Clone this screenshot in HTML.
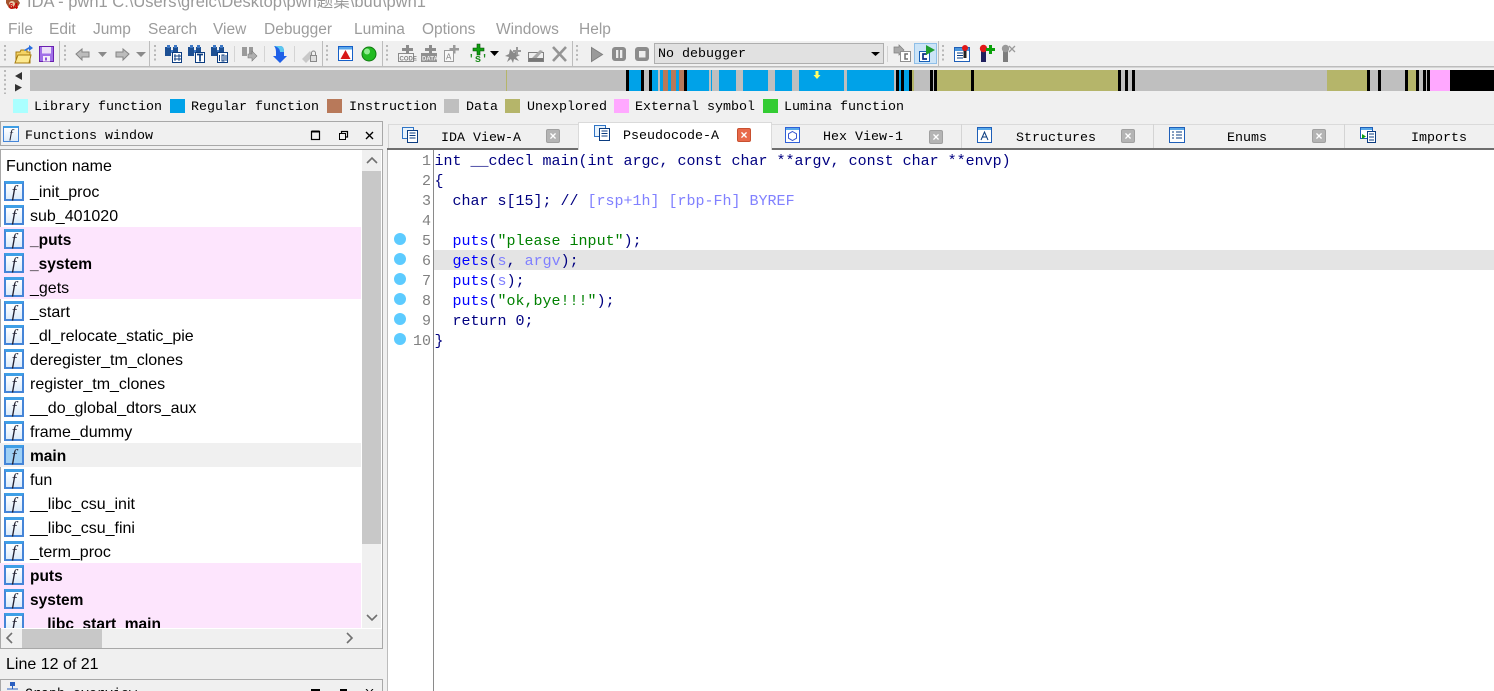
<!DOCTYPE html>
<html><head><meta charset="utf-8"><style>
html,body{margin:0;padding:0;width:1494px;height:691px;overflow:hidden;background:#f0f0f0}
body{position:relative;font-family:"Liberation Sans","Noto Sans CJK SC",sans-serif}
.a{position:absolute;white-space:pre}
.m{font:15.5px/20px "Liberation Sans",sans-serif;color:#9c9c9c;top:20px}
.l{font:13.33px/16px "Liberation Mono",monospace;color:#000;top:100px}
.s{position:absolute;top:99px;width:15px;height:14px}
.t{font:13.33px/16px "Liberation Mono",monospace;color:#000;top:130px}
.r{position:absolute;left:0;width:361px;height:24px}
.r b,.r span{position:absolute;left:30px;top:4px;line-height:20px;color:#000;white-space:pre}
.r span{font-size:16px}
.r b{font-weight:bold;font-size:15.5px}
.i{position:absolute;left:4px;top:2px;box-sizing:border-box;width:20px;height:20px;border:2px solid #4585d8;border-top:3px solid #3f9fe6;background:linear-gradient(#fff,#dcebfa);font:italic 17px/15px "Liberation Serif",serif;text-align:center;color:#223}
.c{font:15px/20px "Liberation Mono",monospace;color:#000080;left:434.500px}
.n{font:15px/20px "Liberation Mono",monospace;color:#808080;right:1063px;}
.d{position:absolute;left:394px;width:12px;height:12px;border-radius:6px;background:#5ccbff}
.b{color:#0000ff}.g{color:#008000}.p{color:#8080ff}
.x{position:absolute;width:14px;height:14px;border-radius:2px;background:#b4b4b4;border:1px solid #a0a0a0;box-sizing:border-box;color:#fff;font:bold 12px/12px "Liberation Sans",sans-serif;text-align:center}
</style></head><body>
<div class="a" style="left:0;top:0;width:1494px;height:41px;background:#fff"></div>
<svg class="a" style="left:4px;top:0" width="18" height="10"><path d="M2 0h12l2 3-3 5-4 1-4-1-3-5z" fill="#a5532e"/><circle cx="8" cy="4" r="3" fill="#e8c8a8"/><text x="5" y="9" font-size="8" font-weight="bold" fill="#c00" font-family="Liberation Sans">64</text></svg>
<div class="a" style="left:27px;top:-8px;font-size:16.500px;line-height:20px;color:#9a9a9a;font-family:'Liberation Sans','Noto Sans CJK SC',sans-serif">IDA - pwn1 C:\Users\greic\Desktop\pwn题集\buu\pwn1</div>
<span class="a m" style="left:8px">File</span><span class="a m" style="left:49px">Edit</span><span class="a m" style="left:93px">Jump</span><span class="a m" style="left:148px">Search</span><span class="a m" style="left:213px">View</span><span class="a m" style="left:264px">Debugger</span><span class="a m" style="left:354px">Lumina</span><span class="a m" style="left:422px">Options</span><span class="a m" style="left:496px">Windows</span><span class="a m" style="left:579px">Help</span>

<!-- toolbar -->
<svg class="a" style="left:0;top:41px" width="1494" height="27" viewBox="0 41 1494 27">
<rect y="66" width="1494" height="1.5" fill="#bcbcbc"/>
<g fill="#bdbdbd"><rect x="59" y="41" width="1" height="25"/><rect x="149" y="41" width="1" height="25"/><rect x="322" y="41" width="1" height="25"/><rect x="382" y="41" width="1" height="25"/><rect x="572" y="41" width="1" height="25"/><rect x="938" y="41" width="1" height="25"/><rect x="234" y="46" width="1" height="16" fill="#d4d4d4"/><rect x="264" y="46" width="1" height="16" fill="#d4d4d4"/><rect x="294" y="46" width="1" height="16" fill="#d4d4d4"/><rect x="887" y="46" width="1" height="16" fill="#d4d4d4"/></g>
<g stroke="#b8b8b8" stroke-width="2" stroke-dasharray="2 2.500"><path d="M5 45v17M65 45v17M155 45v17M327 45v17M387 45v17M577 45v17M943 45v17"/></g>
<!-- open -->
<path d="M16 52h4l1-2h6v2h3v11H16z" fill="#f5d465" stroke="#a67c10"/><path d="M15 63l3-8h13l-2 8z" fill="#fde98f" stroke="#a67c10"/><path d="M24 50l5-3v-2l4 3-4 3v-2l-4 2z" fill="#2a6fe0"/>
<!-- save -->
<rect x="39.500" y="46.500" width="14" height="15" fill="#a070e8" stroke="#6a20b0"/><rect x="42" y="47" width="9" height="6.500" fill="#ece0f8"/><rect x="43" y="56" width="7" height="5.500" fill="#f5f0fa"/><rect x="45" y="57.500" width="2" height="3" fill="#8d52d8"/>
<!-- arrows -->
<path d="M76 54l6-5v3h7v5h-7v3z" fill="#bcbcbc" stroke="#858585"/><path d="M98 52h9l-4.500 5z" fill="#8a8a8a"/><path d="M129 54l-6-5v3h-7v5h7v3z" fill="#bcbcbc" stroke="#858585"/><path d="M136 52h10l-5 5z" fill="#8a8a8a"/>
<!-- binoculars -->
<g id="bn"><path d="M165 47h6v9h-6zM173 47h5v9h-5z" fill="#1c4f93"/><path d="M167 45h3v3h-3zM174 45h3v3h-3zM171 50h2v3h-2z" fill="#3e78c5"/></g>
<rect x="172.500" y="52.500" width="9" height="10" fill="#fff" stroke="#0b3c80"/><path d="M175 54v7M179 54v7M174 56h7M174 59h7" stroke="#0b3c80" stroke-width=".9"/>
<use href="#bn" x="23"/><rect x="195.500" y="52.500" width="9" height="10" fill="#fff" stroke="#0b3c80"/><path d="M197 54.500h6M200 54.500v7" stroke="#0b3c80" stroke-width="1.700"/>
<use href="#bn" x="46"/><rect x="217.500" y="52.500" width="10" height="10" fill="#fff" stroke="#0b3c80"/><path d="M219.500 55v6M222 55h2v6h-2zM226 55v6" stroke="#0b3c80" fill="none"/>
<!-- gray search -->
<g fill="#9a9a9a"><path d="M242 47h5v9h-5zM249 47h4v9h-4z"/><path d="M248 54h4v-3l5 5-5 5v-3h-4z" stroke="#777" stroke-width=".6" fill="#b0b0b0"/></g>
<!-- down arrow -->
<path d="M274 46h6c3 0 4 2 4 6v4h3l-7 7-7-7h3v-4c0-3-1-5-2-6z" fill="#1f60e8"/><path d="M274 46h6c3 0 4 2 4 6h-4c0-3-2-5-6-6z" fill="#5cc8ef"/>
<!-- satellite lock -->
<path d="M302 59l8-8 3 5-7 7z" fill="#c8c8c8"/><rect x="310.500" y="55.500" width="6" height="6" fill="#ddd" stroke="#888"/><path d="M311.500 55v-2a2 2 0 014 0v2" fill="none" stroke="#888"/>
<!-- warn -->
<rect x="338.500" y="46.500" width="14" height="14" fill="#fff" stroke="#1660c8"/><rect x="339" y="47" width="13" height="2.500" fill="#5aa6ea"/><path d="M345.500 50l5 9h-10z" fill="#d81818"/>
<!-- green -->
<circle cx="369" cy="54" r="7" fill="#22bb22" stroke="#107a10"/><circle cx="367" cy="51.500" r="3" fill="#8fec8f"/>
<!-- code/data/A/s -->
<path d="M406 45h3v3h4v3h-4v3h-3v-3h-4v-3h4z" fill="#8c8c8c"/><rect x="398.500" y="53.500" width="15" height="8" fill="#f4f4f4" stroke="#8a8a8a"/><text x="399.500" y="60.500" font-size="6" font-weight="bold" fill="#808080" font-family="Liberation Sans">CODE</text>
<rect x="421" y="53" width="16" height="9" fill="#8f8f8f"/><path d="M429 45h3v3h4v3h-4v3h-3v-3h-4v-3h4z" fill="#8c8c8c"/><text x="422" y="60.500" font-size="6" font-weight="bold" fill="#eee" font-family="Liberation Sans">DATA</text>
<rect x="444.500" y="50.500" width="9" height="11" fill="#f8f8f8" stroke="#9a9a9a"/><path d="M453 45h2.500v3h3.500v2.500h-3.500v3h-2.500v-3h-3.500v-2.500h3.500z" fill="#9a9a9a"/><text x="446" y="59.500" font-size="8" fill="#808080" font-family="Liberation Sans">A</text>
<path d="M477 44h3v4h4v3h-4v4h-3v-4h-4v-3h4z" fill="#10a010" stroke="#064a06" stroke-width=".6"/>
<text x="468" y="62" font-size="11" font-weight="bold" fill="#1c8a1c" font-family="Liberation Mono">'s'</text>
<path d="M490 51h9l-4.500 5z" fill="#000"/>
<!-- star/edit/X -->
<path d="M510 49l4 4 4-4-2 5 4 1-4 2 3 4-5-2-1 4-2-4-4 3 2-5-4-1 4-2z" fill="#8a8a8a"/><path d="M516 47h2v3h3v2h-3v3h-2v-3h-3v-2h3z" fill="#9a9a9a"/>
<rect x="528.500" y="52.500" width="15" height="9" fill="#eee" stroke="#808080"/><path d="M531 59l9-9 3 1-8 9z" fill="#a9a9a9"/><rect x="529" y="58" width="14" height="3" fill="#777"/>
<path d="M553 47l13 14M566 47l-13 14" stroke="#949494" stroke-width="2.600"/>
<!-- debug -->
<path d="M591.500 47.500l11 7-11 7z" fill="#9a9a9a" stroke="#808080"/>
<rect x="612" y="47" width="14" height="14" rx="3" fill="#8c8c8c"/><rect x="616" y="50" width="2.300" height="8" fill="#eee"/><rect x="620" y="50" width="2.300" height="8" fill="#eee"/>
<rect x="635" y="47" width="14" height="14" rx="3" fill="#8c8c8c"/><rect x="639" y="51" width="6.500" height="6.500" fill="#eee"/>
<rect x="654.500" y="43.500" width="229" height="20" fill="#e1e1e1" stroke="#aeaeae"/><path d="M871 52h9l-4.500 4z" fill="#000"/>
<path d="M894 47h5v-2l5 5-5 5v-2h-5z" fill="#a8a8a8" stroke="#808080" stroke-width=".7"/><rect x="900.500" y="51.500" width="10" height="10" fill="#fff" stroke="#909090"/><path d="M908 54h-3v5h3" fill="none" stroke="#707070" stroke-width="1.500"/>
<rect x="914.500" y="43.500" width="22" height="20" fill="#cce4f7" stroke="#8fbfe8"/><rect x="919.500" y="51.500" width="10" height="10" fill="#fff" stroke="#1660b8"/><path d="M927 54h-4v5h4" fill="none" stroke="#0d2f86" stroke-width="1.700"/><path d="M926 45l9 5-9 5z" fill="#1f9e2f"/>
<rect x="954.500" y="47.500" width="15" height="14" fill="#fff" stroke="#1f5fb8"/><rect x="955" y="48" width="14" height="3" fill="#4a95dc"/><path d="M957 53h6M957 55.500h6M957 58h6" stroke="#0b3c80"/><rect x="963.500" y="50" width="3" height="8" fill="#222"/><circle cx="965" cy="48" r="3" fill="#e01818"/>
<rect x="981" y="50" width="5" height="12" fill="#20205e"/><circle cx="983.500" cy="48.500" r="3.700" fill="#e01818"/><path d="M989 45h3v3h3v3h-3v3h-3v-3h-3v-3h3z" fill="#0aa00a"/>
<rect x="1003" y="50" width="5" height="12" fill="#7d7d7d"/><circle cx="1005.500" cy="48.500" r="3.700" fill="#9a9a9a"/><path d="M1009 46l6 6M1015 46l-6 6" stroke="#9a9a9a" stroke-width="1.300"/>
</svg>
<span class="a" style="left:658px;top:47px;font:13.33px/16px 'Liberation Mono',monospace;color:#000">No debugger</span>

<!-- overview -->
<svg class="a" style="left:0;top:67px" width="1494" height="28" viewBox="0 67 1494 28">
<path d="M5 70v24" stroke="#b8b8b8" stroke-width="2" stroke-dasharray="2 2.500"/>
<path d="M22 72l-7 4 7 4zM15 84l7 3.500-7 4z" fill="#333"/>
<rect x="30" y="70" width="1464" height="21" fill="#bfbfbf"/>
<g fill="#b5b56a"><rect x="506" y="70" width="1" height="21"/><rect x="912" y="70" width="2" height="21"/><rect x="937" y="70" width="181" height="21"/><rect x="1327" y="70" width="40" height="21"/><rect x="1408" y="70" width="8" height="21"/></g>
<g fill="#00a2e8"><rect x="629" y="70" width="12" height="21"/><rect x="652" y="70" width="6" height="21"/><rect x="660" y="70" width="24" height="21"/><rect x="687" y="70" width="22" height="21"/><rect x="711" y="70" width="1" height="21"/><rect x="719" y="70" width="17" height="21"/><rect x="743" y="70" width="25" height="21"/><rect x="775" y="70" width="17" height="21"/><rect x="799" y="70" width="45" height="21"/><rect x="847" y="70" width="47" height="21"/><rect x="899" y="70" width="2" height="21"/><rect x="904" y="70" width="5" height="21"/></g>
<g fill="#b8795a"><rect x="663" y="70" width="5" height="21"/><rect x="671" y="70" width="5" height="21"/><rect x="679" y="70" width="5" height="21"/></g>
<g fill="#000"><rect x="626" y="70" width="3" height="21"/><rect x="641" y="70" width="3" height="21"/><rect x="649" y="70" width="3" height="21"/><rect x="684" y="70" width="3" height="21"/><rect x="896" y="70" width="3" height="21"/><rect x="901" y="70" width="3" height="21"/><rect x="909" y="70" width="3" height="21"/><rect x="930" y="70" width="3" height="21"/><rect x="934" y="70" width="3" height="21"/><rect x="971" y="70" width="3" height="21"/><rect x="1118" y="70" width="3" height="21"/><rect x="1125" y="70" width="3" height="21"/><rect x="1132" y="70" width="3" height="21"/><rect x="1367" y="70" width="3" height="21"/><rect x="1378" y="70" width="3" height="21"/><rect x="1405" y="70" width="3" height="21"/><rect x="1416" y="70" width="3" height="21"/><rect x="1423" y="70" width="3" height="21"/><rect x="1427" y="70" width="3" height="21"/><rect x="1450" y="70" width="44" height="21"/></g>
<rect x="1430" y="70" width="20" height="21" fill="#ffa8ff"/>
<path d="M815.500 71h3v4h2l-3.500 4-3.500-4h2z" fill="#ffff66"/>
</svg>

<!-- legend -->
<div class="s" style="left:13px;background:#aaffff"></div><span class="a l" style="left:34px">Library function</span>
<div class="s" style="left:170px;background:#00a2e8"></div><span class="a l" style="left:191px">Regular function</span>
<div class="s" style="left:327px;background:#b8795a"></div><span class="a l" style="left:349px">Instruction</span>
<div class="s" style="left:444px;background:#bfbfbf"></div><span class="a l" style="left:466px">Data</span>
<div class="s" style="left:505px;background:#b5b56a"></div><span class="a l" style="left:527px">Unexplored</span>
<div class="s" style="left:614px;background:#ffa8ff"></div><span class="a l" style="left:635px">External symbol</span>
<div class="s" style="left:763px;background:#33cc33"></div><span class="a l" style="left:784px">Lumina function</span>

<!-- functions window -->
<div class="a" style="left:0;top:121px;width:383px;height:25px;border:1px solid #a8a8a8;box-sizing:border-box;background:#f0f0f0"></div>
<div class="i" style="left:3px;top:126px;width:16px;height:16px;line-height:11px;font-size:13px;border-width:2px 1.500px 1.500px">f</div>
<span class="a t" style="left:25px;top:129px">Functions window</span>
<svg class="a" style="left:305px;top:128px" width="75" height="14"><rect x="6.500" y="3.500" width="8" height="8" fill="none" stroke="#000" stroke-width="1.200"/><path d="M6.500 3.500h8" stroke="#000" stroke-width="2"/><rect x="34.500" y="5.500" width="6" height="6" fill="#f0f0f0" stroke="#000"/><path d="M36.500 5V3.500h6v5.500H41" fill="none" stroke="#000" stroke-width="1.200"/><path d="M61 4l7 7M68 4l-7 7" stroke="#000" stroke-width="1.400"/></svg>

<div class="a" style="left:0;top:149px;width:383px;height:500px;background:#fff;border:1px solid #a8a8a8;box-sizing:border-box"></div>
<div class="a" style="left:6px;top:157px;font-size:16px;line-height:20px;color:#000">Function name</div>
<div class="r" style="top:179px"><div class="i">f</div><span>_init_proc</span></div>
<div class="r" style="top:203px"><div class="i">f</div><span>sub_401020</span></div>
<div class="r" style="top:227px;background:#fde5fd"><div class="i">f</div><b>_puts</b></div>
<div class="r" style="top:251px;background:#fde5fd"><div class="i">f</div><b>_system</b></div>
<div class="r" style="top:275px;background:#fde5fd"><div class="i">f</div><span>_gets</span></div>
<div class="r" style="top:299px"><div class="i">f</div><span>_start</span></div>
<div class="r" style="top:323px"><div class="i">f</div><span>_dl_relocate_static_pie</span></div>
<div class="r" style="top:347px"><div class="i">f</div><span>deregister_tm_clones</span></div>
<div class="r" style="top:371px"><div class="i">f</div><span>register_tm_clones</span></div>
<div class="r" style="top:395px"><div class="i">f</div><span>__do_global_dtors_aux</span></div>
<div class="r" style="top:419px"><div class="i">f</div><span>frame_dummy</span></div>
<div class="r" style="top:443px;background:#f0f0f0"><div class="i" style="background:#9fd0f5">f</div><b>main</b></div>
<div class="r" style="top:467px"><div class="i">f</div><span>fun</span></div>
<div class="r" style="top:491px"><div class="i">f</div><span>__libc_csu_init</span></div>
<div class="r" style="top:515px"><div class="i">f</div><span>__libc_csu_fini</span></div>
<div class="r" style="top:539px"><div class="i">f</div><span>_term_proc</span></div>
<div class="r" style="top:563px;background:#fde5fd"><div class="i">f</div><b>puts</b></div>
<div class="r" style="top:587px;background:#fde5fd"><div class="i">f</div><b>system</b></div>
<div class="a" style="left:0;top:611px;width:361px;height:17px;overflow:hidden;background:#fde5fd"><div class="r" style="top:0"><div class="i">f</div><b>__libc_start_main</b></div></div>

<!-- scrollbars -->
<div class="a" style="left:362px;top:150px;width:19px;height:478px;background:#f0f0f0"></div>
<div class="a" style="left:362px;top:171px;width:19px;height:373px;background:#c8c8c8"></div>
<div class="a" style="left:1px;top:629px;width:381px;height:19px;background:#f0f0f0"></div>
<div class="a" style="left:22px;top:629px;width:80px;height:19px;background:#c8c8c8"></div>
<svg class="a" style="left:0;top:150px" width="383" height="500" viewBox="0 150 383 500"><g fill="none" stroke="#707070" stroke-width="1.600"><path d="M367 163l5-5 5 5M367 615l5 5 5-5M12 633l-5 5 5 5M347 633l5 5-5 5"/></g></svg>

<div class="a" style="left:6px;top:655px;font-size:16px;line-height:20px;color:#000">Line 12 of 21</div>
<div class="a" style="left:0;top:679px;width:383px;height:12px;background:#f0f0f0;border:1px solid #a8a8a8;box-sizing:border-box;border-bottom:0;overflow:hidden"><span class="a t" style="left:24px;top:7px">Graph overview</span></div>
<svg class="a" style="left:6px;top:682px" width="14" height="9"><rect x="4" y="0" width="5" height="4" fill="#2a5fc0"/><path d="M6.500 4v3M1 7h11" stroke="#2a5fc0"/></svg>
<svg class="a" style="left:305px;top:689px" width="75" height="2"><rect x="6" y="0" width="9" height="2" fill="#000"/><rect x="35" y="0" width="7" height="2" fill="#000"/><path d="M61 0l2 2M68 0l-2 2" stroke="#000"/></svg>

<!-- tabs -->
<div class="a" style="left:388px;top:124px;width:1106px;height:24px;background:#f0f0f0;border-top:1px solid #dadada;box-sizing:border-box"></div>
<div class="a" style="left:387px;top:148px;width:1107px;height:2px;background:#6e6e6e"></div>
<div class="a" style="left:387px;top:150px;width:1107px;height:541px;background:#fff"></div>
<div class="a" style="left:388px;top:124px;width:1px;height:24px;background:#d4d4d4"></div>
<div class="a" style="left:961px;top:124px;width:1px;height:24px;background:#d4d4d4"></div>
<div class="a" style="left:1153px;top:124px;width:1px;height:24px;background:#d4d4d4"></div>
<div class="a" style="left:1344px;top:124px;width:1px;height:24px;background:#d4d4d4"></div>
<div class="a" style="left:578px;top:122px;width:194px;height:28px;background:#fff;border:1px solid #dadada;border-bottom:0;box-sizing:border-box"></div>

<svg class="a" style="left:0;top:122px" width="1494" height="28" viewBox="0 122 1494 28">
<g id="tb"><rect x="402.500" y="127.500" width="11" height="11" fill="#e8f3fc" stroke="#2f74c6"/><rect x="407.500" y="130.500" width="10" height="12" fill="#fff" stroke="#0b3c80"/><path d="M409.500 133h6M409.500 135.500h6M409.500 138h6" stroke="#0b3c80"/></g>
<use href="#tb" x="192" y="-2"/>
<rect x="785.500" y="127.500" width="14" height="15" fill="#fff" stroke="#2f60d8"/><rect x="786" y="128" width="13" height="2" fill="#58a8ea"/><path d="M792.500 131.500l4 2.300v4.400l-4 2.300-4-2.300v-4.400z" fill="#fff" stroke="#3a56d0"/>
<rect x="977.500" y="127.500" width="14" height="15" fill="#fff" stroke="#1f5fb8"/><rect x="978" y="128" width="13" height="2" fill="#58a8ea"/><path d="M981 140l3.500-8 3.500 8M982.500 137h4" fill="none" stroke="#0b3c80"/>
<rect x="1169.500" y="127.500" width="15" height="15" fill="#fff" stroke="#1f5fb8"/><rect x="1170" y="128" width="14" height="2" fill="#58a8ea"/><path d="M1172 132h2M1172 135h2M1172 138h2M1176 132h6M1176 135h6M1176 138h6" stroke="#0b3c80"/>
<rect x="1360.500" y="127.500" width="12" height="11" fill="#fff" stroke="#1f5fb8"/><rect x="1361" y="128" width="11" height="2" fill="#58a8ea"/><rect x="1367.500" y="131.500" width="8" height="11" fill="#fff" stroke="#0b3c80"/><path d="M1369 134h5M1369 137h5M1369 140h5" stroke="#0b3c80"/><path d="M1362 134l4 2.500-4 2.500z" fill="#10a010"/>
</svg>
<span class="a t" style="left:441px;top:131px">IDA View-A</span>
<span class="a t" style="left:623px;top:129px">Pseudocode-A</span>
<span class="a t" style="left:823px;top:130px">Hex View-1</span>
<span class="a t" style="left:1016px;top:131px">Structures</span>
<span class="a t" style="left:1227px;top:131px">Enums</span>
<span class="a t" style="left:1411px;top:131px">Imports</span>
<div class="x" style="left:546px;top:129px">×</div>
<div class="x" style="left:737px;top:128px;background:#e8694a;border-color:#c8502f">×</div>
<div class="x" style="left:929px;top:130px">×</div>
<div class="x" style="left:1121px;top:129px">×</div>
<div class="x" style="left:1312px;top:129px">×</div>

<!-- code -->
<div class="a" style="left:387px;top:150px;width:1px;height:541px;background:#bcbcbc"></div>
<div class="a" style="left:433px;top:150px;width:1px;height:541px;background:#8a8a8a"></div>
<div class="a" style="left:434px;top:250px;width:1060px;height:20px;background:#e4e4e4"></div>
<div class="d" style="top:233px"></div><div class="d" style="top:253px"></div><div class="d" style="top:273px"></div><div class="d" style="top:293px"></div><div class="d" style="top:313px"></div><div class="d" style="top:333px"></div>
<span class="a n" style="top:152px">1</span><span class="a n" style="top:172px">2</span><span class="a n" style="top:192px">3</span><span class="a n" style="top:212px">4</span><span class="a n" style="top:232px">5</span><span class="a n" style="top:252px">6</span><span class="a n" style="top:272px">7</span><span class="a n" style="top:292px">8</span><span class="a n" style="top:312px">9</span><span class="a n" style="top:332px">10</span>
<div class="a c" style="top:152px">int __cdecl main(int argc, const char **argv, const char **envp)</div>
<div class="a c" style="top:172px">{</div>
<div class="a c" style="top:192px">  char s[15]; // <span class="p">[rsp+1h] [rbp-Fh] BYREF</span></div>
<div class="a c" style="top:232px">  <span class="b">puts</span>(<span class="g">"please input"</span>);</div>
<div class="a c" style="top:252px">  <span class="b">gets</span>(<span class="p">s</span>, <span class="p">argv</span>);</div>
<div class="a c" style="top:272px">  <span class="b">puts</span>(<span class="p">s</span>);</div>
<div class="a c" style="top:292px">  <span class="b">puts</span>(<span class="g">"ok,bye!!!"</span>);</div>
<div class="a c" style="top:312px">  return 0;</div>
<div class="a c" style="top:332px">}</div>
</body></html>
